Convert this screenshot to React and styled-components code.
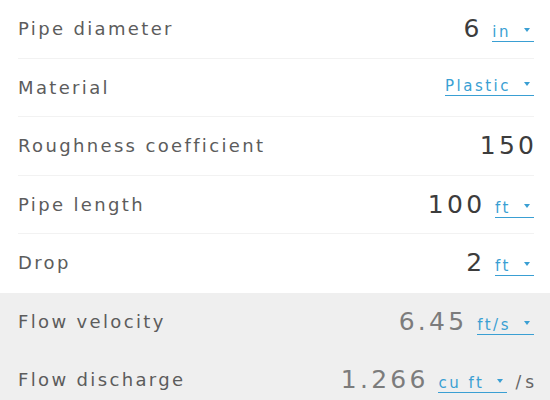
import React from 'react';
import styled, {createGlobalStyle} from 'styled-components';

const GlobalStyle = createGlobalStyle`
  html, body {
    margin: 0;
    padding: 0;
    background: #fff;
    font-family: "DejaVu Sans", "Noto Sans", sans-serif;
  }
`;

const inputs = [
    {label: 'Pipe diameter', value: '6', unit: 'in'},
    {label: 'Material', unit: 'Plastic'},
    {label: 'Roughness coefficient', value: '150'},
    {label: 'Pipe length', value: '100', unit: 'ft'},
    {label: 'Drop', value: '2', unit: 'ft'},
];

const results = [
    {label: 'Flow velocity', value: '6.45', unit: 'ft/s'},
    {label: 'Flow discharge', value: '1.266', unit: 'cu ft', suffix: '/s'},
];

const Row = ({row, result}) => (
    <Item $result={result}>
        <Label>{row.label}</Label>
        <ValueArea>
            {row.value && <Value $result={result}>{row.value}</Value>}
            {row.unit && (
                <Unit>
                    {row.unit}
                    <Caret/>
                </Unit>
            )}
            {row.suffix && <Suffix>{row.suffix}</Suffix>}
        </ValueArea>
    </Item>
);

const App = () => {
    return (
        <>
            <GlobalStyle/>
            <Container>
                <Section>
                    {inputs.map((row) => <Row key={row.label} row={row}/>)}
                </Section>
                <Section $result>
                    {results.map((row) => <Row key={row.label} row={row} result/>)}
                </Section>
            </Container>
        </>
    )
}

const Container = styled.div`
  width: 550px;
  height: 400px;
  overflow: hidden;
  display: flex;
  flex-direction: column;
`;

const Section = styled.div`
  display: flex;
  flex-direction: column;
  background: ${({$result}) => $result ? '#efefef' : '#fff'};
  flex: ${({$result}) => $result ? 1 : 'none'};
`;

const Item = styled.div`
  height: 58.5px;
  box-sizing: border-box;
  margin: 0 16px 0 18px;
  display: flex;
  align-items: center;
  justify-content: space-between;
  border-bottom: 1px solid ${({$result}) => $result ? 'transparent' : '#f2f2f2'};

  &:last-child {
    border-bottom-color: transparent;
  }
`;

const Label = styled.div`
  font-size: 18px;
  color: #5c5c5c;
  letter-spacing: 2.35px;
`;

const ValueArea = styled.div`
  display: flex;
  align-items: baseline;
  gap: 13px;
`;

const Value = styled.div`
  font-size: 25px;
  color: ${({$result}) => $result ? '#7c7c7c' : '#3c3c3c'};
  letter-spacing: 3.3px;
  margin-right: -3.3px;
`;

const Unit = styled.span`
  display: inline-flex;
  align-items: center;
  font-size: 15px;
  color: #3a9fd3;
  letter-spacing: 2.5px;
  border-bottom: 1px solid #3a9fd3;
  line-height: 16px;
  padding-bottom: 1px;
`;

const Caret = styled.span`
  width: 0;
  height: 0;
  margin: 0 4px 4px 13px;
  border-left: 3px solid transparent;
  border-right: 3px solid transparent;
  border-top: 4px solid #3a9fd3;
`;

const Suffix = styled.span`
  font-size: 17px;
  color: #666;
  letter-spacing: 4px;
  margin-left: -5px;
  margin-right: -4px;
`;

export default App;
